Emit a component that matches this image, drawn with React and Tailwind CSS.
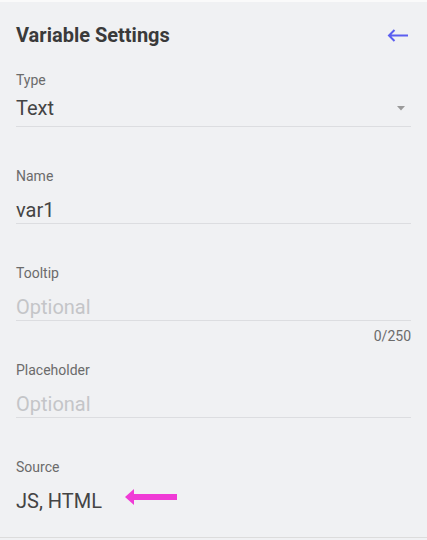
import React from 'react'

function Field({ label, value, placeholder }) {
  return (
    <div className="flex flex-col">
      <label className="text-[14px] leading-[16px] text-[#6b6b6b]">{label}</label>
      <div className="mt-[14px] border-b border-[#dcdde0] pb-[1px]">
        {value ? (
          <div className="text-[20px] leading-[24px] text-[#444]">{value}</div>
        ) : (
          <div className="text-[20px] leading-[24px] text-[#c4c5c8]">{placeholder}</div>
        )}
      </div>
    </div>
  )
}

export default function App() {
  return (
    <div className="w-[427px] h-[540px] bg-[#f0f1f3] border-t-2 border-[#fafafa] font-['Roboto',sans-serif]">
      <div className="h-[536px] border-b border-[#dcdcdc] px-4 pt-[21px]">
        <div className="flex items-center justify-between">
          <h1 className="text-[20px] leading-[24px] font-bold text-[#3a3a3a]">Variable Settings</h1>
          <svg width="22" height="13" viewBox="0 0 22 13" className="mr-[2px]">
            <path d="M2 6.5H21M7.5 1L2 6.5L7.5 12" fill="none" stroke="#5b5ef0" strokeWidth="2" />
          </svg>
        </div>

        <div className="mt-[25px] flex flex-col">
          <label className="text-[14px] leading-[16px] text-[#6b6b6b]">Type</label>
          <div className="mt-[8px] flex items-center justify-between border-b border-[#dcdde0] pb-[6px]">
            <div className="text-[20px] leading-[24px] text-[#444]">Text</div>
            <svg width="8" height="5" viewBox="0 0 8 5" className="mr-[6px]">
              <path d="M0 0h8L4 4.5z" fill="#9a9a9a" />
            </svg>
          </div>
        </div>

        <div className="mt-[41px]">
          <Field label="Name" value="var1" />
        </div>
        <div className="mt-[41px]">
          <Field label="Tooltip" placeholder="Optional" />
          <div className="mt-[7px] text-right text-[14px] leading-[16px] text-[#6b6b6b]">0/250</div>
        </div>
        <div className="mt-[18px]">
          <Field label="Placeholder" placeholder="Optional" />
        </div>

        <div className="mt-[41px] flex flex-col">
          <label className="text-[14px] leading-[16px] text-[#6b6b6b]">Source</label>
          <div className="mt-[14px] flex items-center">
            <div className="text-[20px] leading-[24px] text-[#444]">JS, HTML</div>
            <svg width="52" height="16" viewBox="0 0 52 16" className="ml-[23px] -mt-[8px]">
              <path d="M0 8L9 0V5H52V11H9V16Z" fill="#f03bd6" />
            </svg>
          </div>
        </div>
      </div>
    </div>
  )
}
